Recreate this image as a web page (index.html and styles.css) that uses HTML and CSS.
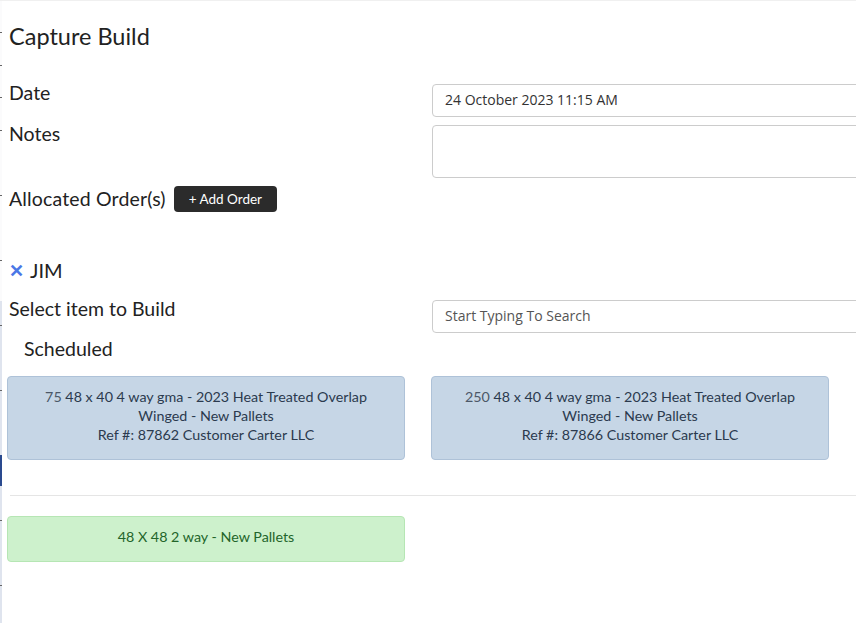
FILE: index.html
```html
<!DOCTYPE html>
<html>
<head>
<meta charset="utf-8">
<link rel="stylesheet" href="styles.css">
</head>
<body>
<div class="edge"><div class="edge-mark"></div></div>
<div class="page">
  <h1 class="title">Capture Build</h1>
  <div class="row">
    <div class="col label">Date</div>
    <div class="col"><div class="input">24 October 2023 11:15 AM</div></div>
  </div>
  <div class="row">
    <div class="col label">Notes</div>
    <div class="col"><div class="input textarea"></div></div>
  </div>
  <div class="alloc">
    <span class="label">Allocated Order(s)</span>
    <button class="btn">+ Add Order</button>
  </div>
  <div class="tag"><span class="x">✕</span> JIM</div>
  <div class="row">
    <div class="col label">Select item to Build</div>
    <div class="col"><div class="input placeholder">Start Typing To Search</div></div>
  </div>
  <div class="sched">Scheduled</div>
  <div class="cards">
    <div class="card blue"><span class="qty">75</span> 48 x 40 4 way gma - 2023 Heat Treated Overlap<br>Winged - New Pallets<br>Ref #: 87862 Customer Carter LLC</div>
    <div class="card blue"><span class="qty">250</span> 48 x 40 4 way gma - 2023 Heat Treated Overlap<br>Winged - New Pallets<br>Ref #: 87866 Customer Carter LLC</div>
  </div>
  <hr class="sep">
  <div class="cards">
    <div class="card green">48 X 48 2 way - New Pallets</div>
  </div>
</div>
</body>
</html>
```
FILE: styles.css
```css
html, body { margin: 0; padding: 0; background: #fff; overflow: hidden; }
body { width: 856px; height: 623px; border-top: 1px solid #f0f0f0; box-sizing: border-box; font-family: "Lato", "Open Sans", sans-serif; color: #222; position: relative; }
.edge { position: absolute; left: 0; top: 0; width: 2px; height: 623px; background: repeating-linear-gradient(to bottom, transparent 0, transparent 31.5px, #666 31.5px, #666 32.5px), linear-gradient(to bottom, #fbfbfc 0, #fbfbfc 300px, #dfe4ee 300px); }
.edge-mark { position: absolute; left: 0; top: 454px; width: 2px; height: 31px; background: #2a4a8f; }
.page { padding-left: 9px; display: flex; flex-direction: column; }
.title { margin: 0; padding-top: 20px; font-size: 23.5px; font-weight: 400; line-height: 30px; height: 83px; box-sizing: border-box; }
.row { display: flex; margin-bottom: 8px; }
.col { width: 424px; }
.label { font-size: 19.5px; line-height: 18px; }
.input { width: 440px; height: 33px; box-sizing: border-box; border: 1px solid #ccc; border-radius: 4px; font-size: 14px; line-height: 30px; padding-left: 12px; color: #333; font-family: "Open Sans", sans-serif; }
.textarea { height: 53px; }
.placeholder { color: #555; }
.alloc { display: flex; align-items: center; gap: 8px; height: 26px; }
.alloc .label { line-height: 26px; letter-spacing: 0.15px; }
.btn { background: #2b2b2b; color: #fff; border: none; border-radius: 4px; height: 26px; padding: 0 15px; font-family: "Lato", sans-serif; font-size: 13.5px; }
.tag { margin-top: 46px; margin-bottom: 18px; font-size: 20px; line-height: 24px; height: 24px; display: flex; align-items: center; gap: 6px; padding-left: 0; }
.x { color: #4a78e6; font-size: 18px; font-weight: 700; }
.sched { font-size: 19.5px; line-height: 24px; padding-left: 15px; margin-top: -4px; height: 24px; margin-bottom: 15px; }
.cards { display: flex; gap: 26px; margin-left: -2px; }
.card { width: 398px; box-sizing: border-box; border-radius: 4px; text-align: center; font-size: 14.3px; line-height: 19px; }
.blue { background: #c6d6e6; border: 1px solid #aec2d8; color: #2b3a4e; padding: 10px 0 0; height: 84px; }
.qty { color: #4c5868; }
.green { background: #cdf1cc; border: 1px solid #b6e6b4; color: #23652a; padding: 9px 0; height: 46px; line-height: 22px; }
.sep { border: none; border-top: 1px solid #e5e5e5; margin: 35px 0 20px 1px; width: 100%; }
```
